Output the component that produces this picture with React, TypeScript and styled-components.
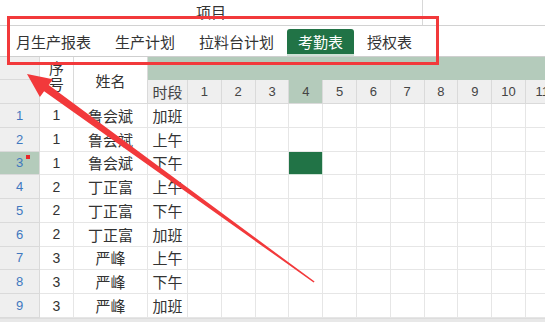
import { Fragment } from "react";
import styled, { createGlobalStyle } from "styled-components";

const GlobalStyle = createGlobalStyle`
  html, body {
    margin: 0;
    padding: 0;
    background: #ffffff;
    overflow: hidden;
  }
  body {
    font-family: "Noto Sans CJK SC", "Liberation Sans", sans-serif;
    color: #333333;
  }
`;

const Page = styled.div`
  position: relative;
  width: 545px;
  height: 322px;
  overflow: hidden;
  display: flex;
  flex-direction: column;
`;

const TitleBar = styled.div`
  display: grid;
  grid-template-columns: 423px 1fr;
  height: 25px;
  border-bottom: 1px solid #d2d2d2;
`;

const TitleCell = styled.div`
  border-right: 1px solid #d8d8d8;
  display: flex;
  align-items: center;
  justify-content: center;
  font-size: 15px;
  line-height: 1;
  padding-bottom: 2px;
  color: #333;
`;

const TabBar = styled.div`
  display: flex;
  align-items: flex-end;
  gap: 2px;
  height: 30px;
  padding-left: 5px;
  border-bottom: 1px solid #cfcfcf;
`;

const Tab = styled.div<{ $active?: boolean }>`
  height: 27px;
  padding: 0 11px;
  display: flex;
  align-items: center;
  font-size: 15px;
  line-height: 1;
  padding-bottom: 1px;
  box-sizing: border-box;
  border-radius: 3px 3px 0 0;
  color: ${(p) => (p.$active ? "#ffffff" : "#333333")};
  background: ${(p) => (p.$active ? "#217346" : "transparent")};
  border-bottom: 2px solid ${(p) => (p.$active ? "#cfe2d6" : "transparent")};
`;

const Sheet = styled.div`
  display: grid;
  grid-template-columns: 40px 34px 74px 40px repeat(12, 33.8px);
  grid-template-rows: 23px 24px repeat(9, 23.78px);
  flex: none;
`;

const Cell = styled.div`
  box-sizing: border-box;
  border-right: 1px solid #e6e6e6;
  border-bottom: 1px solid #e6e6e6;
  display: flex;
  align-items: center;
  justify-content: center;
  overflow: hidden;
  white-space: nowrap;
`;

const Corner = styled(Cell)`
  background: #efefef;
  border-color: #dadada;
`;

const MergedHead = styled(Cell)`
  grid-row: span 2;
  background: #ffffff;
  border-color: #dadada;
  font-size: 15px;
  line-height: 1;
`;

const SeqHead = styled(MergedHead)`
  flex-direction: column;
  justify-content: flex-start;
  padding-top: 3px;
  line-height: 16px;
`;

const Band = styled(Cell)`
  grid-column: 4 / -1;
  background: #b4cbbb;
  border-color: #b4cbbb;
`;

const ColHead = styled(Cell)<{ $selected?: boolean; $cjk?: boolean }>`
  background: ${(p) => (p.$selected ? "#b4cbbb" : "#efefef")};
  border-color: #dadada;
  font-family: ${(p) =>
    p.$cjk ? `"Noto Sans CJK SC", sans-serif` : `"Liberation Sans", sans-serif`};
  font-size: ${(p) => (p.$cjk ? "15px" : "13px")};
  color: #444;
  line-height: 1;
`;

const RowNum = styled(Cell)<{ $selected?: boolean }>`
  position: relative;
  background: ${(p) => (p.$selected ? "#b4cbbb" : "#efefef")};
  border-color: #dadada;
  font-family: "Liberation Sans", sans-serif;
  font-size: 13px;
  color: #3f78bf;
`;

const CommentMark = styled.span`
  position: absolute;
  left: 26px;
  top: 3px;
  width: 4px;
  height: 4px;
  background: #e8262b;
`;

const NumCell = styled(Cell)`
  font-family: "Liberation Sans", sans-serif;
  font-size: 14px;
  color: #333;
`;

const TextCell = styled(Cell)`
  font-size: 15px;
  line-height: 1;
  color: #333;
`;

const DayCell = styled(Cell)<{ $filled?: boolean }>`
  background: ${(p) => (p.$filled ? "#217346" : "#ffffff")};
  border-color: ${(p) => (p.$filled ? "#cfe2d6" : "#e6e6e6")};
`;

const ScrollStrip = styled.div`
  flex: 1;
  background: #e8e8e8;
  border-top: 1px solid #dddddd;
`;

const Overlay = styled.svg`
  position: absolute;
  left: 0;
  top: 0;
  pointer-events: none;
`;

const tabs = ["月生产报表", "生产计划", "拉料台计划", "考勤表", "授权表"];

const rows = [
  { seq: 1, name: "鲁会斌", period: "加班" },
  { seq: 1, name: "鲁会斌", period: "上午" },
  { seq: 1, name: "鲁会斌", period: "下午" },
  { seq: 2, name: "丁正富", period: "上午" },
  { seq: 2, name: "丁正富", period: "下午" },
  { seq: 2, name: "丁正富", period: "加班" },
  { seq: 3, name: "严峰", period: "上午" },
  { seq: 3, name: "严峰", period: "下午" },
  { seq: 3, name: "严峰", period: "加班" },
];

const days = Array.from({ length: 12 }, (_, i) => i + 1);

export default function App() {
  return (
    <>
      <GlobalStyle />
      <Page>
        <TitleBar>
          <TitleCell>项目</TitleCell>
          <div />
        </TitleBar>
        <TabBar>
          {tabs.map((t) => (
            <Tab key={t} $active={t === "考勤表"}>
              {t}
            </Tab>
          ))}
        </TabBar>
        <Sheet>
          <Corner />
          <SeqHead>
            <span>序</span>
            <span>号</span>
          </SeqHead>
          <MergedHead>姓名</MergedHead>
          <Band />
          <Corner />
          <ColHead $cjk>时段</ColHead>
          {days.map((d) => (
            <ColHead key={d} $selected={d === 4}>
              {d}
            </ColHead>
          ))}
          {rows.map((r, i) => (
            <Fragment key={i}>
              <RowNum $selected={i === 2}>
                {i + 1}
                {i === 2 && <CommentMark />}
              </RowNum>
              <NumCell>{r.seq}</NumCell>
              <TextCell>{r.name}</TextCell>
              <TextCell>{r.period}</TextCell>
              {days.map((d) => (
                <DayCell key={d} $filled={i === 2 && d === 4} />
              ))}
            </Fragment>
          ))}
        </Sheet>
        <ScrollStrip />
        <Overlay width="545" height="322" viewBox="0 0 545 322">
          <rect
            x="8.5"
            y="17.5"
            width="429"
            height="46"
            fill="none"
            stroke="#f2393b"
            strokeWidth="3"
          />
          <polygon
            points="27,74 52.9,79.2 48.7,84.9 314.6,281.6 313.6,282.4 44.1,91.3 39.9,97"
            fill="#f2393b"
          />
        </Overlay>
      </Page>
    </>
  );
}
